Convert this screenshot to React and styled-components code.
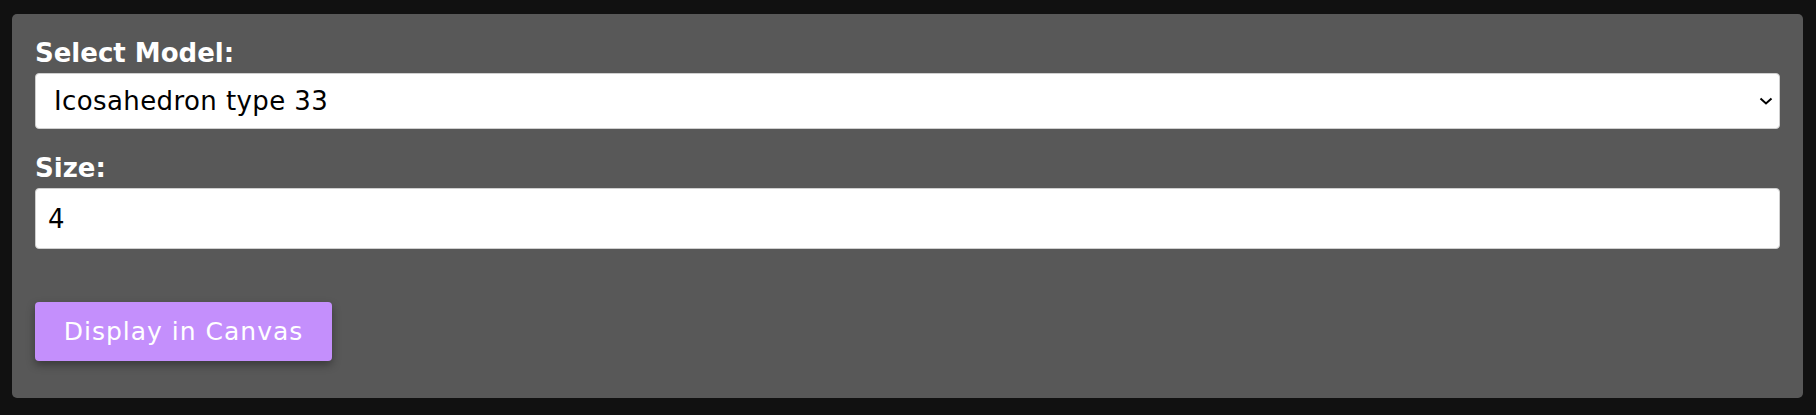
import React, { useState } from "react";
import styled, { createGlobalStyle } from "styled-components";

const GlobalStyle = createGlobalStyle`
  html, body {
    margin: 0;
    padding: 0;
    background: #111111;
  }
  body {
    font-family: "DejaVu Sans", Verdana, sans-serif;
  }
`;

const Page = styled.div`
  padding: 14px 13px 16px 12px;
`;

const Panel = styled.form`
  background: #585858;
  border-radius: 5px;
  padding: 24px 23px 37px 23px;
  display: flex;
  flex-direction: column;
`;

const Field = styled.div`
  display: flex;
  flex-direction: column;
  gap: 5px;
  margin-bottom: ${(p) => p.$spacing || 0}px;
`;

const Label = styled.label`
  color: #ffffff;
  font-size: 26px;
  font-weight: bold;
  line-height: 30px;
`;

const SelectWrap = styled.div`
  position: relative;
`;

const Select = styled.select`
  appearance: none;
  -webkit-appearance: none;
  width: 100%;
  height: 56px;
  box-sizing: border-box;
  border: 1px solid #cfcfcf;
  border-radius: 4px;
  background: #ffffff;
  color: #000000;
  font-family: "DejaVu Sans", Verdana, sans-serif;
  font-size: 26px;
  letter-spacing: 0.4px;
  padding: 0 40px 0 18px;
  outline: none;
`;

const Chevron = styled.svg`
  position: absolute;
  right: 7px;
  top: 50%;
  transform: translateY(-50%);
  pointer-events: none;
`;

const Input = styled.input`
  width: 100%;
  height: 61px;
  box-sizing: border-box;
  border: 1px solid #cfcfcf;
  border-radius: 4px;
  background: #ffffff;
  color: #000000;
  font-family: "DejaVu Sans", Verdana, sans-serif;
  font-size: 26px;
  padding: 0 12px;
  outline: none;
`;

const Button = styled.button`
  align-self: flex-start;
  width: 297px;
  height: 59px;
  border: none;
  border-radius: 4px;
  background: #c48ffc;
  color: #ffffff;
  font-family: "DejaVu Sans", Verdana, sans-serif;
  font-size: 25px;
  letter-spacing: 1px;
  cursor: pointer;
  box-shadow: 0 4px 9px rgba(0, 0, 0, 0.35);
`;

export default function App() {
  const [model, setModel] = useState("ico33");
  const [size, setSize] = useState("4");

  return (
    <Page>
      <GlobalStyle />
      <Panel onSubmit={(e) => e.preventDefault()}>
        <Field $spacing={24}>
          <Label htmlFor="model">Select Model:</Label>
          <SelectWrap>
            <Select id="model" value={model} onChange={(e) => setModel(e.target.value)}>
              <option value="ico33">Icosahedron type 33</option>
              <option value="ico1">Icosahedron type 1</option>
              <option value="dodeca">Dodecahedron</option>
            </Select>
            <Chevron width="14" height="8" viewBox="0 0 14 8">
              <path d="M1.5 1.5 L7 6.5 L12.5 1.5" fill="none" stroke="#000" strokeWidth="2" />
            </Chevron>
          </SelectWrap>
        </Field>
        <Field $spacing={53}>
          <Label htmlFor="size">Size:</Label>
          <Input id="size" type="text" value={size} onChange={(e) => setSize(e.target.value)} />
        </Field>
        <Button type="submit">Display in Canvas</Button>
      </Panel>
    </Page>
  );
}
